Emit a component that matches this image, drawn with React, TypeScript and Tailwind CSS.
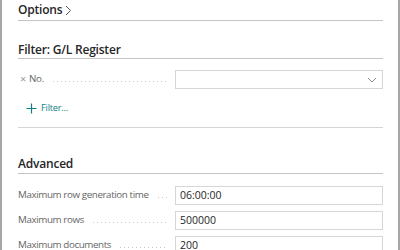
import React from 'react';

const font = { fontFamily: '"Open Sans", "Noto Sans", sans-serif' };

function Leader() {
  return <div className="flex-1 h-px mt-[3px] ml-[9px] bg-[linear-gradient(to_right,#c9c9c9_1px,transparent_1px)] bg-[length:4px_1px] bg-repeat-x" />;
}

function FieldRow({ label, value }: { label: string; value: string }) {
  return (
    <div className="flex items-center h-[19px] mb-[6px]">
      <div className="w-[150px] flex items-center text-[9.8px] tracking-[-0.4px] text-[#666666] whitespace-nowrap">
        <span>{label}</span>
        <Leader />
      </div>
      <div className="flex-1 ml-[7px] h-[19px] border border-[#d6d6d6] flex items-center px-[4px] text-[10.5px] text-[#262626]">
        {value}
      </div>
    </div>
  );
}

export default function App() {
  return (
    <div style={font} className="w-[400px] h-[250px] overflow-hidden bg-white border-l-2 border-r-2 border-[#a6a6a6]">
      <div className="pl-4 pr-[15px]">
        {/* Options */}
        <div className="h-[21px] border-b border-[#c4c4c4] flex items-center">
          <span className="text-[12px] font-semibold tracking-[-0.2px] text-[#262626] leading-none">Options</span>
          <svg width="8" height="11" viewBox="0 0 8 11" className="ml-[2px] mt-[1px]">
            <path d="M2 1 L6.5 5.5 L2 10" fill="none" stroke="#555" strokeWidth="1" />
          </svg>
        </div>

        {/* Filter section */}
        <div className="mt-[23px] h-[15px] border-b border-[#c4c4c4] flex items-start">
          <span className="text-[12px] font-semibold tracking-[-0.2px] text-[#262626] leading-[12px]">Filter: G/L Register</span>
        </div>
        <div className="flex items-center h-[19px] mt-[11px]">
          <div className="w-[150px] flex items-center text-[9.8px] tracking-[-0.3px] text-[#666666] whitespace-nowrap">
            <span className="text-[#9a9a9a] text-[11px] ml-[2px] mr-[3px]">×</span>
            <span>No.</span>
            <Leader />
          </div>
          <div className="flex-1 ml-[7px] h-[19px] border border-[#d6d6d6] flex items-center justify-end pr-[5px]">
            <svg width="10" height="6" viewBox="0 0 10 6">
              <path d="M1 1 L5 5 L9 1" fill="none" stroke="#8a8a8a" strokeWidth="1" />
            </svg>
          </div>
        </div>
        <div className="flex items-center mt-[11px] ml-[8px] h-[16px]">
          <svg width="11" height="11" viewBox="0 0 11 11">
            <path d="M5.5 0.5 V10.5 M0.5 5.5 H10.5" stroke="#0f7f85" strokeWidth="1.2" />
          </svg>
          <span className="ml-[4px] text-[9.2px] tracking-[-0.2px] text-[#0f7f85]">Filter...</span>
        </div>
        <div className="mt-[11px] border-b border-[#d4d4d4]" />

        {/* Advanced */}
        <div className="mt-[30px] h-[16px] border-b border-[#c4c4c4] flex items-start">
          <span className="text-[12px] font-semibold tracking-[-0.2px] text-[#262626] leading-[12px]">Advanced</span>
        </div>
        <div className="mt-[12px]">
          <FieldRow label="Maximum row generation time" value="06:00:00" />
          <FieldRow label="Maximum rows" value="500000" />
          <FieldRow label="Maximum documents" value="200" />
        </div>
      </div>
    </div>
  );
}
